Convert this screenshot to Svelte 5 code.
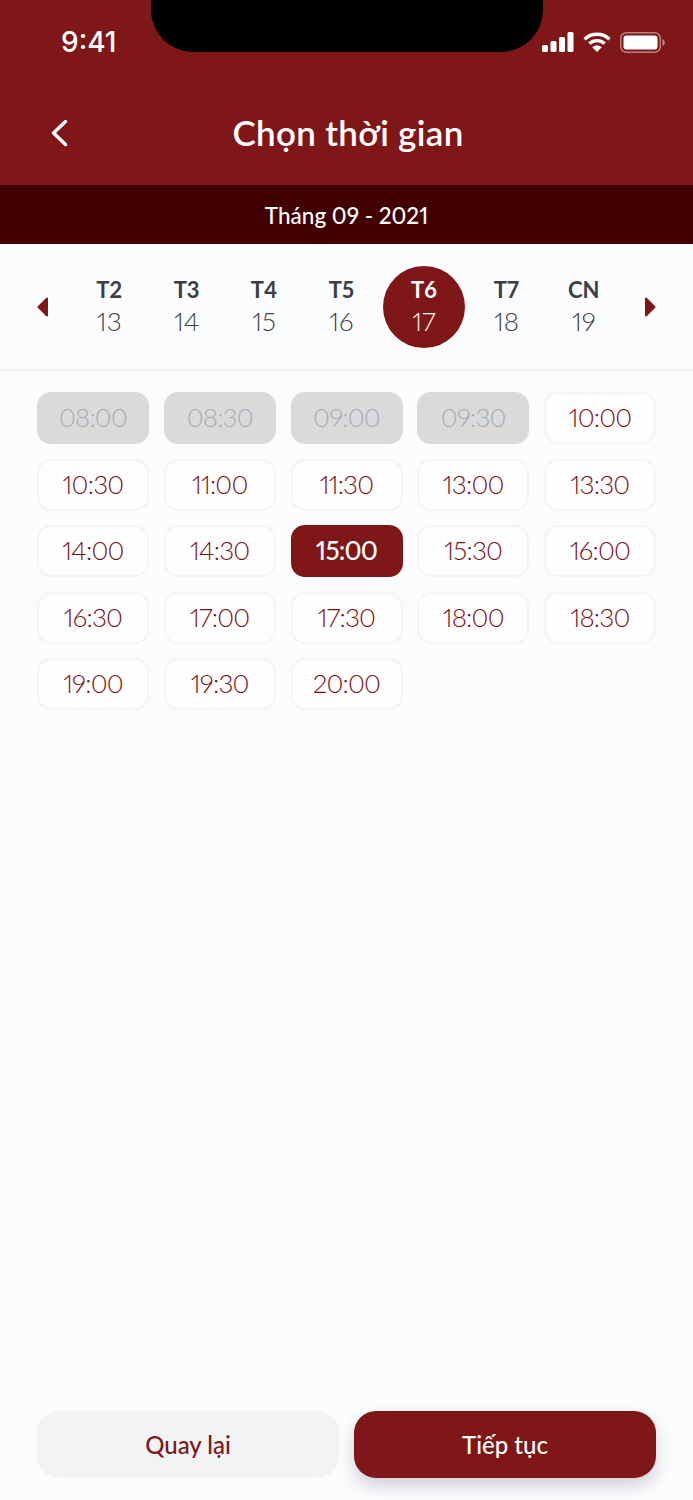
<script>
  const days = [
    { d: 'T2', n: 13 }, { d: 'T3', n: 14 }, { d: 'T4', n: 15 }, { d: 'T5', n: 16 },
    { d: 'T6', n: 17, active: true }, { d: 'T7', n: 18 }, { d: 'CN', n: 19 }
  ];
  const disabled = ['08:00', '08:30', '09:00', '09:30'];
  const times = ['08:00','08:30','09:00','09:30','10:00','10:30','11:00','11:30','13:00','13:30','14:00','14:30','15:00','15:30','16:00','16:30','17:00','17:30','18:00','18:30','19:00','19:30','20:00'];
</script>

<div class="page">
  <header class="top">
    <div class="notch"></div>
    <div class="status">
      <span class="clock">9:41</span>
      <div class="sys">
        <svg width="32" height="20" viewBox="0 0 32 20"><g fill="#fff"><rect x="0" y="13" width="6" height="7" rx="1.5"/><rect x="8.5" y="9" width="6" height="11" rx="1.5"/><rect x="17" y="5" width="6" height="15" rx="1.5"/><rect x="25.5" y="0" width="6" height="20" rx="1.5"/></g></svg>
        <svg width="28" height="20" viewBox="0 0 28 20"><g fill="none" stroke="#fff" stroke-width="3.4"><path d="M1.6 7.2C8.6 .6 19.4 .6 26.4 7.2"/><path d="M6.3 11.6c4.4-4 11-4 15.4 0"/></g><path d="M14 20l-4.8-4.8c2.7-2.2 6.9-2.2 9.6 0z" fill="#fff"/></svg>
        <svg width="45" height="21" viewBox="0 0 45 21"><rect x=".75" y=".75" width="39.5" height="19.5" rx="5.5" fill="none" stroke="#fff" stroke-opacity=".45" stroke-width="1.5"/><rect x="3.5" y="3.5" width="34" height="14" rx="3" fill="#fff"/><path d="M42.5 7v7c1.4-.5 2.2-2 2.2-3.500s-.8-3-2.200-3.500z" fill="#fff" fill-opacity=".5"/></svg>
      </div>
    </div>
    <div class="nav">
      <svg class="back" width="18" height="28" viewBox="0 0 18 28"><path d="M15.500 2.500L3.500 14l12 11.500" fill="none" stroke="#fff" stroke-width="3.400" stroke-linecap="round" stroke-linejoin="round"/></svg>
      <h1>Chọn thời gian</h1>
    </div>
  </header>

  <div class="month">Tháng 09 - 2021</div>

  <section class="dates">
    <svg class="arrow" width="12" height="20" viewBox="0 0 12 20"><path d="M10 1.500v17L1.500 10z" fill="#7f1618" stroke="#7f1618" stroke-width="2" stroke-linejoin="round"/></svg>
    <div class="days">
      {#each days as day}
        <div class="day" class:active={day.active}>
          <span class="dow">{day.d}</span>
          <span class="num">{day.n}</span>
        </div>
      {/each}
    </div>
    <svg class="arrow" width="12" height="20" viewBox="0 0 12 20"><path d="M2 1.500v17L10.500 10z" fill="#7f1618" stroke="#7f1618" stroke-width="2" stroke-linejoin="round"/></svg>
  </section>

  <section class="slots">
    {#each times as t}
      <div class="slot" class:off={disabled.includes(t)} class:on={t === '15:00'}>{t}</div>
    {/each}
  </section>

  <footer class="actions">
    <button class="btn ghost">Quay lại</button>
    <button class="btn solid">Tiếp tục</button>
  </footer>
</div>

<style>
  :global(body) { margin: 0; background: #fbfcfe; }
  .page {
    width: 693px;
    height: 1500px;
    display: flex;
    flex-direction: column;
    background: #fbfcfe;
    font-family: Lato, "Noto Sans", sans-serif;
    font-variant-numeric: proportional-nums;
    overflow: hidden;
    opacity: 0.999;
  }
  .top {
    position: relative;
    height: 185px;
    background: #7f1618;
    color: #fff;
    box-sizing: border-box;
  }
  .notch {
    position: absolute;
    left: 151px;
    top: 0;
    width: 392px;
    height: 52px;
    background: #000;
    border-radius: 0 0 42px 42px;
  }
  .status {
    display: flex;
    justify-content: space-between;
    align-items: center;
    height: 84px;
    padding: 0 28px 0 61px;
  }
  .clock {
    font-family: Inter, sans-serif;
    font-size: 28px;
    font-weight: 500;
    line-height: 84px;
  }
  .sys { display: flex; align-items: center; gap: 9px; }
  .nav {
    position: relative;
    display: flex;
    justify-content: center;
    height: 101px;
  }
  .back { position: absolute; left: 50px; top: 35px; }
  h1 {
    margin: 0;
    font-size: 35px;
    font-weight: 600;
    letter-spacing: 0.3px;
    line-height: 97px;
    padding-left: 3px;
  }
  .month {
    height: 59px;
    line-height: 61px;
    text-align: center;
    background: #420000;
    color: #fff;
    font-size: 22.5px;
    font-weight: 500;
  }
  .dates {
    height: 127px;
    box-sizing: border-box;
    border-bottom: 2px solid #f3f4f6;
    display: flex;
    align-items: center;
    justify-content: space-between;
    padding: 0 37px 0;
  }
  .days {
    display: flex;
    flex: 1;
    justify-content: center;
  }
  .day {
    width: 77.400px;
    height: 82px;
    flex: none;
    border-radius: 50%;
    display: flex;
    flex-direction: column;
    align-items: center;
    justify-content: center;
    color: #3c3e42;
    box-sizing: border-box;
    padding-bottom: 2px;
  }
  .day.active {
    width: 82px;
    margin: 0 2.800px;
    background: #7f1618;
    color: #fff;
  }
  .dow { font-size: 22px; font-weight: 700; line-height: 30px; }
  .num { font-size: 26px; font-weight: 300; line-height: 32px; }
  .slots {
    display: grid;
    grid-template-columns: repeat(5, 112px);
    grid-auto-rows: 52px;
    column-gap: 14.750px;
    row-gap: 14.500px;
    padding: 21px 37px 0;
    flex: 1;
    align-content: start;
  }
  .slot {
    box-sizing: border-box;
    border: 2px solid #f3f4f6;
    border-radius: 14px;
    background: #fdfdfe;
    color: #7a0f12;
    font-size: 26px;
    font-weight: 300;
    letter-spacing: -0.8px;
    padding-bottom: 2px;
    display: flex;
    align-items: center;
    justify-content: center;
  }
  .slot.off {
    background: #d9dadc;
    border-color: #d9dadc;
    color: #abacae;
  }
  .slot.on {
    background: #7f1618;
    border-color: #7f1618;
    color: #fff;
    font-weight: 500;
  }
  .actions {
    display: flex;
    gap: 15px;
    padding: 0 37px 22px;
  }
  .btn {
    flex: 1;
    height: 67px;
    border: 0;
    border-radius: 22px;
    font-family: inherit;
    font-size: 24px;
    font-weight: 500;
  }
  .ghost { background: #f2f3f5; color: #7f1618; }
  .solid {
    background: #7f1618;
    color: #fff;
    box-shadow: 0 8px 16px rgba(60, 60, 70, 0.22);
  }
</style>
